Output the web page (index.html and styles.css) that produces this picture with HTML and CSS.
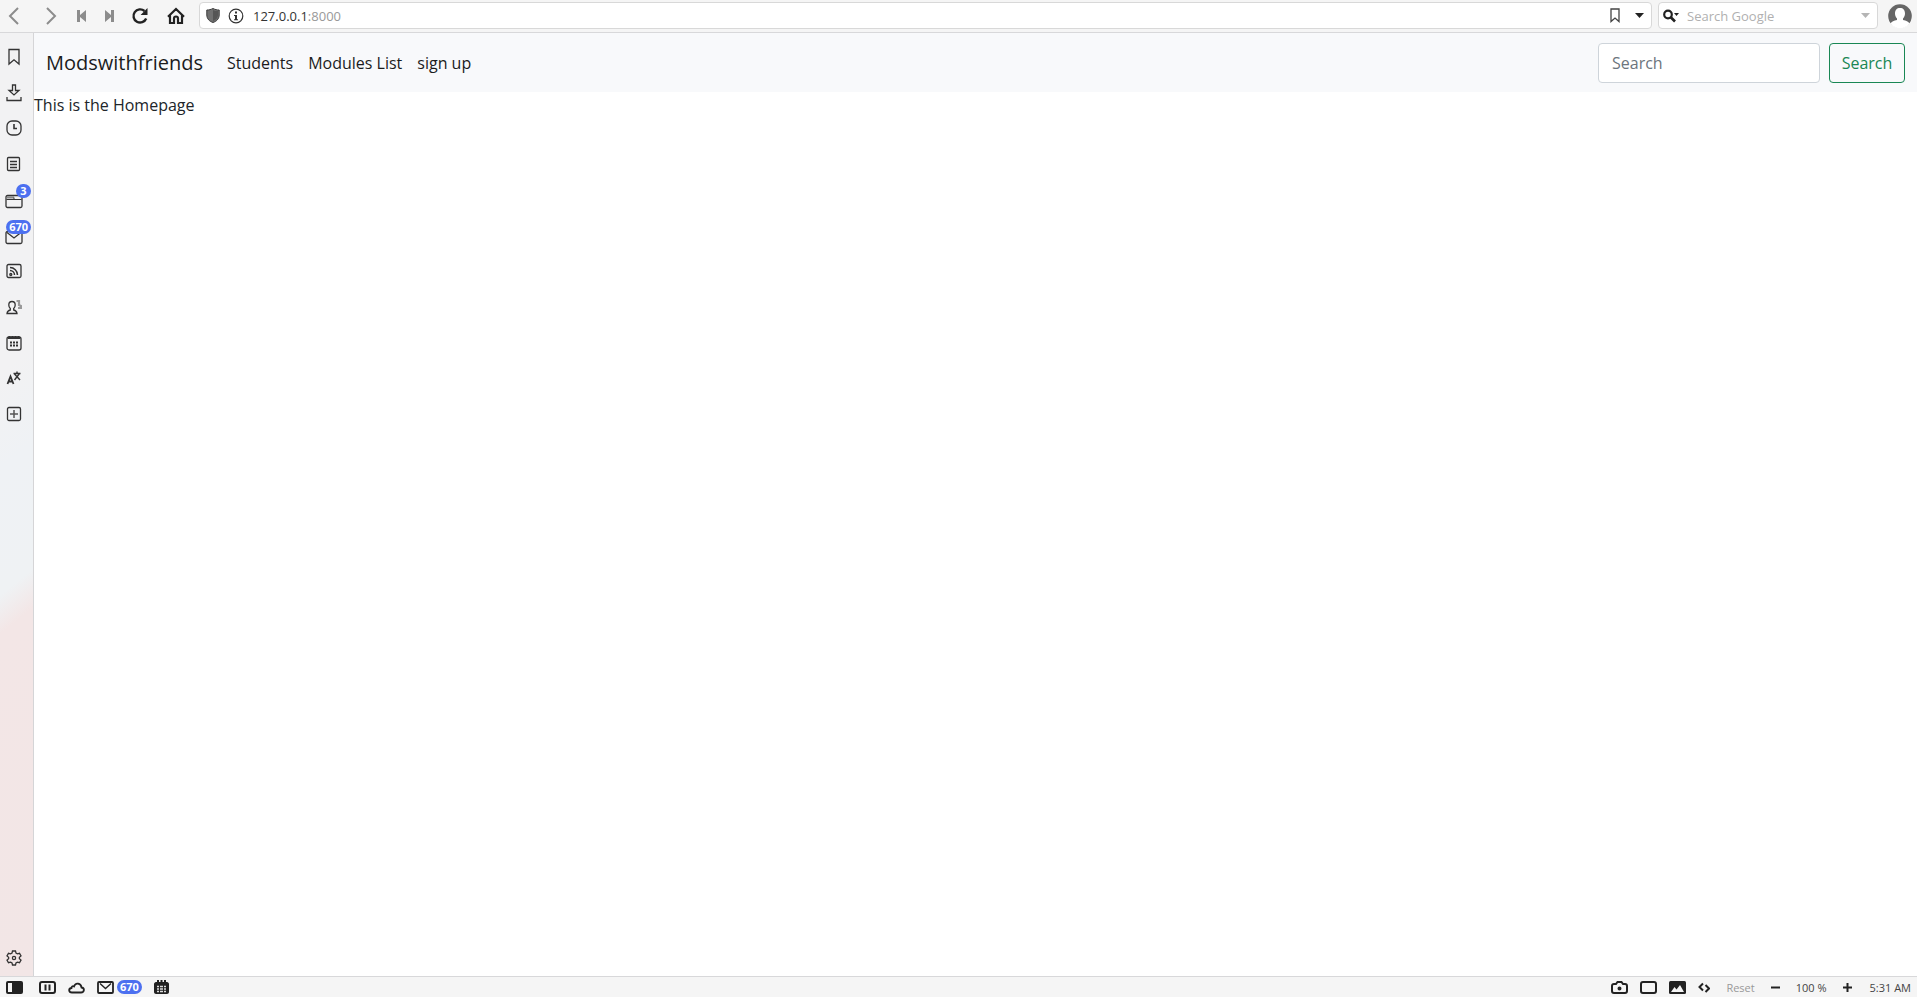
FILE: index.html
```html
<!DOCTYPE html>
<html lang="en">
<head>
    <meta charset="UTF-8">
    <meta name="viewport" content="width=device-width, initial-scale=1.0">
    <title>Modswithfriends</title>
    <link rel="stylesheet" href="styles.css">
</head>
<body>
    <header class="toolbar">
        <button class="tool muted" aria-label="Back"><svg width="12" height="18" viewBox="0 0 12 18"><path d="M10 1 2 9l8 8" fill="none" stroke="currentColor" stroke-width="2"/></svg></button>
        <button class="tool muted" aria-label="Forward"><svg width="12" height="18" viewBox="0 0 12 18"><path d="m2 1 8 8-8 8" fill="none" stroke="currentColor" stroke-width="2"/></svg></button>
        <button class="tool muted" aria-label="Rewind"><svg width="10" height="14" viewBox="0 0 10 14"><path d="M0 1h3v5l6-5v12L3 8v5H0z" fill="currentColor"/></svg></button>
        <button class="tool muted" aria-label="Fast forward"><svg width="10" height="14" viewBox="0 0 10 14"><path d="M10 1H7v5L1 1v12l6-5v5h3z" fill="currentColor"/></svg></button>
        <button class="tool" aria-label="Reload"><svg width="18" height="18" viewBox="0 0 18 18"><path d="M15.2 11.5A6.6 6.6 0 1 1 13.5 4" fill="none" stroke="currentColor" stroke-width="2.4"/><path d="M16.5 1v7H9.6z" fill="currentColor"/></svg></button>
        <button class="tool" aria-label="Home"><svg width="18" height="18" viewBox="0 0 18 18"><path d="M1 9.7 9 2l8 7.7M3 8.5V16h4v-4.5a2 2 0 0 1 4 0V16h4V8.5" fill="none" stroke="currentColor" stroke-width="2.2"/></svg></button>

        <div class="address">
            <svg width="14" height="15" viewBox="0 0 14 15"><path d="M7 .5C9 1.500 11 2 13.200 2v5c0 4-3 6.500-6.200 7.500C3.800 13.500.8 11 .8 7V2C3 2 5 1.500 7 .5z" fill="#707070" stroke="#3c3c3c"/><path d="M7 2v11c3-1.200 5-3 5-6V3c-2 0-3.500-.3-5-1z" fill="#555"/></svg>
            <svg width="16" height="16" viewBox="0 0 16 16"><circle cx="8" cy="8" r="6.800" fill="none" stroke="#333" stroke-width="1.200"/><path d="M7 3.500h2v2H7zM6 7h3v4.300h1v1H6v-1h1V8H6z" fill="#333"/></svg>
            <a class="url" href="http://127.0.0.1:8000">127.0.0.1<span>:8000</span></a>
            <button class="tool" aria-label="Bookmark page"><svg width="10" height="15" viewBox="0 0 10 15"><path d="M1 1h8v12.500L5 10l-4 3.500z" fill="none" stroke="#444" stroke-width="1.300"/></svg></button>
            <button class="tool" aria-label="Address history"><svg width="9" height="5" viewBox="0 0 9 5"><path d="M0 0h9L4.500 5z" fill="currentColor"/></svg></button>
        </div>

        <div class="web-search">
            <svg width="16" height="14" viewBox="0 0 16 14"><circle cx="5" cy="5.500" r="3.800" fill="none" stroke="#222" stroke-width="2.200"/><path d="m7.500 8 4.500 4.500" stroke="#222" stroke-width="2.600"/><path d="M11 4h5l-2.500 3z" fill="#222"/></svg>
            <input type="text" placeholder="Search Google" aria-label="Search Google">
            <button class="tool faint" aria-label="Search history"><svg width="9" height="5" viewBox="0 0 9 5"><path d="M0 0h9L4.500 5z" fill="currentColor"/></svg></button>
        </div>

        <button class="tool profile" aria-label="Profile"><svg width="24" height="24" viewBox="0 0 24 24"><circle cx="12" cy="12" r="11.800" fill="#666"/><path d="M12 4c3.200 0 5 2 5 5.500 0 2-.8 3.800-2 5v1.500c3 .5 5.500 1.500 6.500 3.500a11.800 11.800 0 0 1-19 0c1-2 3.500-3 6.500-3.500v-1.500c-1.200-1.200-2-3-2-5C7 6 8.800 4 12 4z" fill="#fff"/></svg></button>
    </header>

    <div class="middle">
        <aside class="panels">
            <div class="panel-list">
                <button aria-label="Bookmarks"><svg width="16" height="18" viewBox="0 0 16 18"><path d="M3 1.500h10v14.500l-5-4.200-5 4.200z"/></svg></button>
                <button aria-label="Downloads"><svg width="16" height="18" viewBox="0 0 16 18"><path d="M6.500 1h3v5.500H13L8 11 3 6.500h3.500zM1 13v3.500h14V13"/></svg></button>
                <button aria-label="History"><svg width="16" height="18" viewBox="0 0 16 18"><rect x="1" y="2" width="14" height="14" rx="5"/><path d="M8 5v4.500h3" stroke-width="1.600"/></svg></button>
                <button aria-label="Notes"><svg width="16" height="18" viewBox="0 0 16 18"><rect x="1.500" y="2.500" width="12" height="13" rx="1"/><path d="M4 6.500h7M4 9.500h7M4 12.500h7"/></svg></button>
                <button aria-label="Window"><svg width="18" height="18" viewBox="0 0 18 18"><path d="M2 6.500h7" stroke="#888" stroke-width="2"/><path d="M9 6.500v2M1.500 8.500h15" stroke-width="1"/><rect x="1" y="4.500" width="16" height="12" rx="1.500"/></svg><span class="badge">3</span></button>
                <button aria-label="Mail"><svg width="18" height="18" viewBox="0 0 18 18"><rect x="1" y="4.500" width="16" height="12" rx="1.500"/><path d="m2 5.500 7 5.500 7-5.500"/></svg><span class="badge">670</span></button>
                <button aria-label="Feeds"><svg width="16" height="18" viewBox="0 0 16 18"><rect x="1" y="2.500" width="14" height="13" rx="1.500"/><path d="M4 5.500a7.500 7.500 0 0 1 7.500 7.500M4 8.500A4.500 4.500 0 0 1 8.500 13" stroke-width="1.500"/><circle cx="4.800" cy="12.500" r="1"/></svg></button>
                <button aria-label="Contacts"><svg width="16" height="18" viewBox="0 0 16 18"><path d="M10.500 3h2.500v4l2 1v2h-3" stroke="#999" stroke-width="2.200"/><path d="M6 3.500c2 0 3.200 1.300 3.200 3.500 0 1.800-.6 2.700-1.500 3.500v1.500c2 .5 3 1.200 3.300 3.500H1c.3-2.300 1.300-3 3.300-3.500v-1.500C3.400 9.700 2.800 8.800 2.800 7c0-2.200 1.200-3.500 3.200-3.500z"/></svg></button>
                <button aria-label="Calendar"><svg width="16" height="18" viewBox="0 0 16 18"><rect x="1" y="3" width="14" height="13" rx="2"/><path d="M2 4h12M3.500 2v2M6.500 2v2M9.500 2v2M12.500 2v2" stroke-width="2"/><path d="M4 8.500h2m1 0h2m1 0h2M4 11.500h2m1 0h2m1 0h2" stroke-width="2"/></svg></button>
                <button aria-label="Translate"><svg width="16" height="18" viewBox="0 0 16 18"><path d="m1.500 15 3-7.500 3 7.500M2.500 12.500h4" stroke-width="1.800"/><path d="M7.500 4.500h7M11 2.500v2M8.500 11l5-6.500M8.500 5l5.500 6" stroke-width="1.400"/></svg></button>
                <button aria-label="Add web panel"><svg width="16" height="18" viewBox="0 0 16 18"><rect x="1.500" y="2.500" width="13" height="13" rx="1.500"/><path d="M8 5v8M4 9h8" stroke="#555" stroke-width="1.500"/></svg></button>
            </div>
            <button class="settings" aria-label="Settings"><svg width="16" height="16" viewBox="0 0 16 16"><path d="m6.500 1h3l.5 2.100 1.400.8 2.100-.6 1.500 2.600-1.600 1.400v1.400l1.600 1.400-1.500 2.600-2.100-.6-1.400.8-.5 2.100h-3L6 12.900l-1.400-.8-2.100.6L1 10.100l1.600-1.400V7.300L1 5.900l1.500-2.600 2.100.6L6 3.100z"/><circle cx="8" cy="8" r="1.600"/></svg></button>
        </aside>

        <main class="page">
            <nav class="navbar">
                <a class="navbar-brand" href="#">Modswithfriends</a>
                <div class="navbar-nav">
                    <a href="#">Students</a>
                    <a href="#">Modules List</a>
                    <a href="#">sign up</a>
                </div>
                <form class="search-form">
                    <input type="search" placeholder="Search" aria-label="Search">
                    <button type="submit">Search</button>
                </form>
            </nav>
            <p class="content">This is the Homepage</p>
        </main>
    </div>

    <footer class="statusbar">
        <div class="status-left">
            <button aria-label="Toggle panel"><svg width="17" height="13" viewBox="0 0 17 13"><rect width="17" height="13" rx="2" fill="#222" stroke="none"/><path d="M2 2h4v9H2z" fill="#f5f5f5" stroke="none"/></svg></button>
            <button aria-label="Page tiling"><svg width="17" height="13" viewBox="0 0 17 13"><rect x="1" y="1" width="15" height="11" rx="2"/><path d="M6.500 3.500v6M10.500 3.500v6"/></svg></button>
            <button aria-label="Sync"><svg width="17" height="13" viewBox="0 0 17 13"><path d="M4 11.500h9c3.500 0 4-4.500.5-5C13 2 7.500 1 6 5.500 4.500 4.800 3.500 5.500 3.500 7 .2 7.500.5 11.500 4 11.500z" stroke-width="1.800"/></svg></button>
            <button class="mail" aria-label="Mail status"><svg width="17" height="13" viewBox="0 0 17 13"><rect x="1" y="1" width="15" height="11" rx="1" stroke-width="1.800"/><path d="m3 2.500 5.500 5 5.500-5" stroke-width="1.400"/></svg><span class="badge">670</span></button>
            <button aria-label="Calendar status"><svg width="15" height="15" viewBox="0 0 15 15"><path d="M2 2h1V0h2v2h1.500V0h2v2H10V0h2v2h1c1 0 2 1 2 2v8c0 1-1 2-2 2H2c-1 0-2-1-2-2V4c0-1 1-2 2-2z" fill="#222" stroke="none"/><path d="M3 6.500h2m1 0h3m1 0h2M3 9h2m1 0h3m1 0h2M3 11.500h2m1 0h3m1 0h2" stroke="#ddd" stroke-width="1.500"/></svg></button>
        </div>
        <div class="status-right">
            <button aria-label="Capture page"><svg width="17" height="13" viewBox="0 0 17 13"><path d="M3 3h2l1.500-2h4L12 3h2c1.300 0 2 .7 2 2v5c0 1.300-.7 2-2 2H3c-1.300 0-2-.7-2-2V5c0-1.300.7-2 2-2z"/><circle cx="8.500" cy="7.500" r="1" fill="#222"/></svg></button>
            <button aria-label="Break mode"><svg width="17" height="13" viewBox="0 0 17 13"><rect x="1" y="1" width="15" height="11" rx="2"/></svg></button>
            <button aria-label="Images"><svg width="17" height="13" viewBox="0 0 17 13"><rect width="17" height="13" rx="1.500" fill="#222" stroke="none"/><path d="m2 11 3.500-5 2 2.500L11 4l4 7z" fill="#f5f5f5" stroke="none"/></svg></button>
            <button aria-label="Page actions"><svg width="12" height="13" viewBox="0 0 12 13"><path d="M5 2.500 1.500 6 5 9.500M7.500 4 11 7.500 7.500 11"/></svg></button>
            <button class="reset" disabled>Reset</button>
            <button aria-label="Zoom out"><svg width="9" height="9" viewBox="0 0 9 9"><path d="M0 4.500h9"/></svg></button>
            <span class="zoom-level">100 %</span>
            <button aria-label="Zoom in"><svg width="9" height="9" viewBox="0 0 9 9"><path d="M0 4.500h9M4.500 0v9"/></svg></button>
            <time>5:31 AM</time>
        </div>
    </footer>
</body>
</html>
```
FILE: styles.css
```css
* {
    box-sizing: border-box;
}
body {
    font-family: "Open Sans", "Noto Sans", sans-serif;
    margin: 0;
    min-height: 100vh;
    display: flex;
    flex-direction: column;
    background-color: #fff;
    color: #212529;
}
button, input {
    font-family: inherit;
}
button {
    padding: 0;
    border: none;
    background: none;
    color: #222;
}
svg {
    display: block;
    flex-shrink: 0;
}
a {
    text-decoration: none;
}

/* browser toolbar */
.toolbar {
    display: grid;
    grid-template-columns: 28px 46px 16px 38px 24px 47px 1fr 226px 39px;
    height: 33px;
    padding: 2px 0 3px;
    background-color: #f5f5f5;
    border-bottom: 1px solid #d8d8da;
}
.tool {
    display: flex;
    justify-content: center;
    align-items: center;
}
.muted {
    color: #8c8c8c;
}
.faint {
    color: #b5b5b5;
}
.address, .web-search {
    display: flex;
    align-items: center;
    height: 27px;
    background-color: #fff;
    border: 1px solid #d8d8d8;
    border-radius: 4px;
    font-size: 13px;
}
.address {
    padding: 0 4px 0 6px;
    gap: 8px;
}
.address .tool {
    width: 16px;
}
.url {
    flex: 1;
    margin-left: 1px;
    color: #333;
}
.url span {
    color: #999;
}
.web-search {
    margin-left: 6px;
    padding: 0 7px 0 4px;
    gap: 8px;
}
.web-search input {
    flex: 1;
    min-width: 0;
    padding: 0;
    border: none;
    outline: none;
    font-size: 13px;
}
.web-search input::placeholder {
    color: #b0b0b0;
}
.profile {
    padding-left: 5px;
}

/* side panel */
.middle {
    flex: 1;
    display: flex;
}
.panels {
    width: 34px;
    display: flex;
    flex-direction: column;
    justify-content: space-between;
    padding: 6px 0 8px;
    border-right: 1px solid #d5d5d7;
    background: linear-gradient(141deg, #f2f2f3 0%, #f2f2f3 35%, #eff2f5 45%, #eff2f4 58%, #f3e6e6 62%, #f2e6e6 100%);
}
.panel-list {
    display: flex;
    flex-direction: column;
    height: 393px;
}
.panels button {
    position: relative;
    width: 28px;
    display: flex;
    justify-content: center;
    align-items: center;
}
.panel-list button {
    flex: 1;
}
.panels svg {
    fill: none;
    stroke: #333;
    stroke-width: 1.3;
}
.badge {
    height: 14px;
    padding: 0 3px;
    border-radius: 7px;
    background-color: #4c70f0;
    color: #fff;
    font-size: 11px;
    font-weight: 700;
    line-height: 14px;
}
.panels .badge {
    position: absolute;
    top: 2px;
    right: -3px;
    min-width: 15px;
}
.settings {
    height: 20px;
}

/* page */
.page {
    flex: 1;
}
.navbar {
    display: flex;
    align-items: center;
    height: 59px;
    padding: 0 12px;
    background-color: #f8f9fb;
}
.navbar-brand {
    margin-right: 24px;
    font-size: 20px;
    color: #1b1c1d;
}
.navbar-nav {
    display: flex;
    flex: 1;
    gap: 15px;
}
.navbar-nav a {
    font-size: 16px;
    color: #1b1c1d;
}
.search-form {
    display: flex;
    gap: 9px;
}
.search-form input {
    width: 222px;
    height: 40px;
    padding: 0 13px;
    border: 1px solid #ced4da;
    border-radius: 4px;
    background-color: #fff;
    font-size: 16px;
}
.search-form input::placeholder {
    color: #6c757d;
}
.search-form button {
    width: 76px;
    height: 40px;
    border: 1px solid #198754;
    border-radius: 4px;
    font-size: 16px;
    color: #198754;
}
.content {
    margin: 0;
    font-size: 16px;
    line-height: 26px;
}

/* status bar */
.statusbar {
    display: flex;
    justify-content: space-between;
    height: 21px;
    padding: 0 6px;
    background-color: #f5f5f5;
    border-top: 1px solid #d8d8da;
    font-size: 11px;
    color: #444;
}
.status-left, .status-right {
    display: flex;
    align-items: center;
    gap: 12px;
}
.status-left button:first-child {
    margin-right: 4px;
}
.statusbar svg {
    fill: none;
    stroke: #222;
    stroke-width: 2;
}
.statusbar .mail {
    display: flex;
    align-items: center;
    gap: 3px;
}
.statusbar .reset {
    font-size: 11px;
    color: #999;
    margin: 0 4px;
}
.zoom-level {
    margin: 0 4px;
}
.statusbar time {
    margin-left: 6px;
}
```
